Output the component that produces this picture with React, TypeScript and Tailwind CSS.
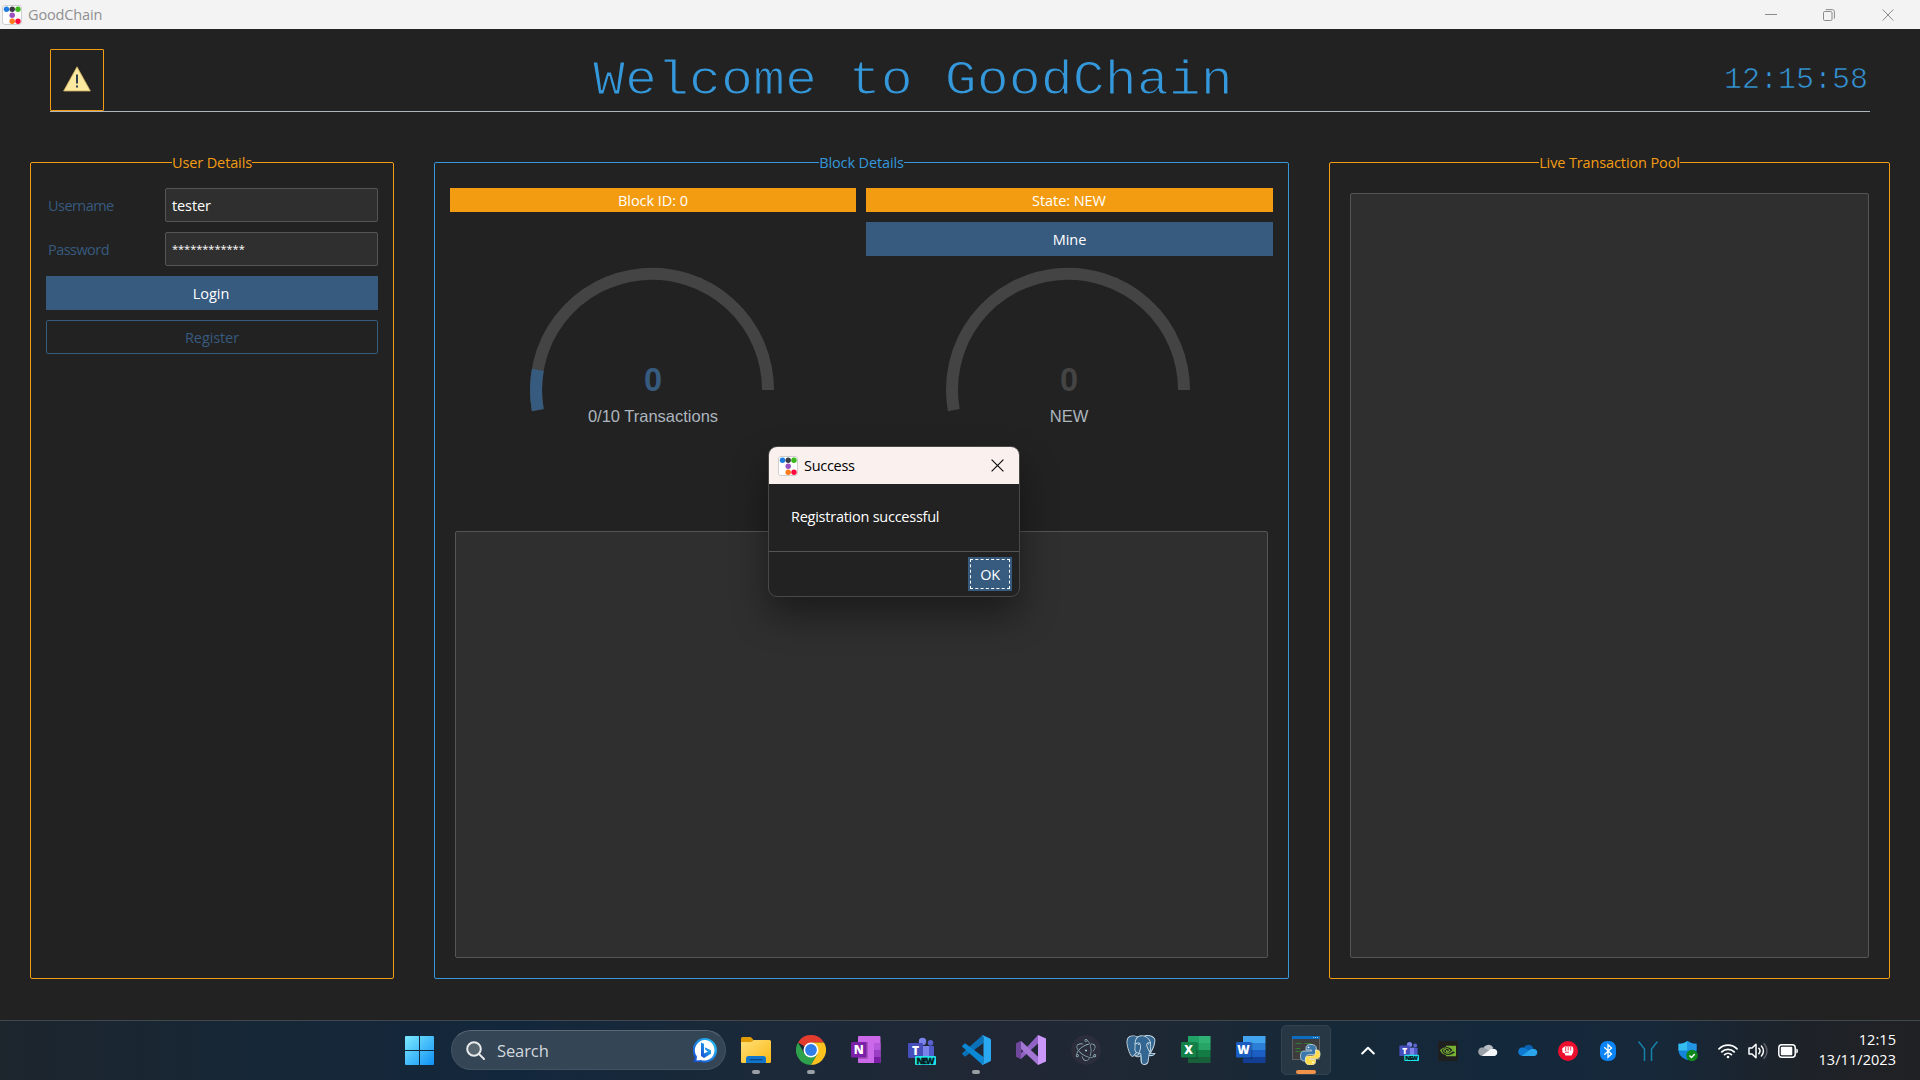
import type { ReactNode } from "react";
import { SiElectron, SiNvidia, SiPostgresql } from "react-icons/si";

function AppLogo() {
  return (
    <svg width="20" height="20" viewBox="0 0 20 20">
      <rect x="0.5" y="0.5" width="19" height="19" rx="2.5" fill="#fff" stroke="#cfcfcf" />
      <circle cx="4.5" cy="4.2" r="2.7" fill="#1e7be0" />
      <circle cx="10.2" cy="4.2" r="2.7" fill="#3b3b46" />
      <circle cx="16" cy="4.2" r="2.7" fill="#3cb81c" />
      <circle cx="10.2" cy="10.2" r="2.7" fill="#9b51bf" />
      <circle cx="10.2" cy="16.3" r="2.7" fill="#ff7a1a" />
      <circle cx="16" cy="16.3" r="2.7" fill="#ff0a3c" />
    </svg>
  );
}

function TitleBar() {
  return (
    <div className="flex h-[29px] items-center bg-[#f3f3f3] pl-[2px] pr-[26px]">
      <AppLogo />
      <span className="ml-[6px] flex-1 text-[14.5px] leading-5 tracking-[-0.15px] text-[#8f8f8f]">GoodChain</span>
      <div className="flex items-center gap-[47px] text-[#8a8a8a]">
        <svg width="12" height="12" viewBox="0 0 12 12" fill="none" stroke="currentColor" className="mr-[-1px]">
          <path d="M0 5.5h12" />
        </svg>
        <svg width="12" height="12" viewBox="0 0 12 12" fill="none" stroke="currentColor">
          <rect x="0.5" y="2.5" width="8.5" height="9" rx="1.2" />
          <path d="M2.8 .6H9.4a2 2 0 0 1 2 2V9.6" />
        </svg>
        <svg width="12" height="12" viewBox="0 0 12 12" fill="none" stroke="currentColor">
          <path d="M.7.5 11.3 11.5M11.3.5.7 11.5" />
        </svg>
      </div>
    </div>
  );
}

function Header() {
  return (
    <header className="mx-[50px] mt-5 flex h-[63px] items-start border-b border-[#adb5bd]">
      <div className="flex h-[62px] w-[54px] items-center justify-center rounded-[1px] border border-[#f39c12]">
        <svg width="28" height="26" viewBox="0 0 28 26" className="mt-[-3px]">
          <path d="M14 .8 27.4 25H.6Z" fill="#fce9a0" stroke="#c9a95a" strokeWidth=".8" strokeLinejoin="round" />
          <rect x="13" y="8.5" width="2" height="9" fill="#2f3e50" />
          <rect x="13" y="19.5" width="2" height="2" fill="#2f3e50" />
        </svg>
      </div>
      <h1 className="flex-1 origin-bottom scale-y-[0.91] pl-[489px] font-['Liberation_Mono',monospace] text-[53.3px] leading-[60px] text-[#3498db] [-webkit-text-stroke:1.3px_#222]">
        Welcome to GoodChain
      </h1>
      <div className="mt-[13px] scale-y-[0.96] pr-[2px] font-['Liberation_Mono',monospace] text-[30px] leading-9 text-[#3498db] [-webkit-text-stroke:0.7px_#222]">
        12:15:58
      </div>
    </header>
  );
}

function Panel({ title, className, children }: { title: string; className: string; children: ReactNode }) {
  return (
    <fieldset className={"h-[827px] rounded-[2px] border " + className}>
      <legend className="mx-auto h-[21px] whitespace-nowrap text-[14.5px] leading-[21px] tracking-[-0.12px]">
        {title}
      </legend>
      {children}
    </fieldset>
  );
}

function Field({ label, value, masked }: { label: string; value: string; masked?: boolean }) {
  return (
    <div className="flex h-[34px] items-center">
      <span className="w-[117px] pt-px text-[14.5px] leading-5 tracking-[-0.55px] text-[#375a7f]">{label}</span>
      <div
        className={
          "flex h-[34px] flex-1 items-center rounded-[2px] border border-[#555] bg-[#2f2f2f] pl-[6px] pt-px text-white " +
          (masked ? "text-[11px]" : "text-[14.5px] tracking-[-0.1px]")
        }
      >
        {value}
      </div>
    </div>
  );
}

function UserPanel() {
  return (
    <Panel title="User Details" className="w-[364px] border-[#f39c12] text-[#f39c12]">
      <div className="flex flex-col gap-[10px] pl-[15px] pr-[15px] pt-[15px] text-[14.5px]">
        <div className="flex flex-col gap-[10px] pl-[2px]">
          <Field label="Username" value="tester" />
          <Field label="Password" value="************" masked />
        </div>
        <div className="flex h-[34px] items-center justify-center bg-[#375a7f] pr-[2px] pt-px text-white">Login</div>
        <div className="flex h-[34px] items-center justify-center rounded-[2px] border border-[#375a7f] pt-px tracking-[-0.1px] text-[#375a7f]">
          Register
        </div>
      </div>
    </Panel>
  );
}

function Gauge({ label, started }: { label: string; started: boolean }) {
  return (
    <svg width="406" height="269" viewBox="0 0 406 269" fill="none" fontFamily="Liberation Sans, sans-serif">
      <path d="M87.8 148.1A116 116 0 1 1 318 128" stroke="#444" strokeWidth="12" />
      {started && <path d="M87.8 148.1A116 116 0 0 1 87.8 107.9" stroke="#375a7f" strokeWidth="12" />}
      <text x="203" y="129" textAnchor="middle" fontSize="32.5" fontWeight="700" fill={started ? "#375a7f" : "#444"}>
        0
      </text>
      <text x="203" y="160" textAnchor="middle" fontSize="16.5" fill="#adb5bd">
        {label}
      </text>
    </svg>
  );
}

function BlockPanel() {
  return (
    <Panel title="Block Details" className="ml-10 w-[855px] border-[#3498db] text-[#3498db]">
      <div className="flex flex-col px-[15px] pt-[15px] text-[14.5px] tracking-[-0.05px] text-white">
        <div className="grid grid-cols-[406px_407px] gap-[10px]">
          <div className="flex h-6 items-center justify-center bg-[#f39c12] pt-px">Block ID: 0</div>
          <div className="flex h-6 items-center justify-center bg-[#f39c12] pr-px pt-px">State: NEW</div>
          <div />
          <div className="flex h-[34px] items-center justify-center bg-[#375a7f] pt-px">Mine</div>
        </div>
        <div className="mt-[6px] grid grid-cols-[406px_407px] gap-[10px] tracking-normal">
          <Gauge label="0/10 Transactions" started />
          <Gauge label="NEW" started={false} />
        </div>
        <div className="ml-[5px] h-[427px] w-[813px] rounded-[2px] border border-[#555] bg-[#2f2f2f]" />
      </div>
    </Panel>
  );
}

function PoolPanel() {
  return (
    <Panel title="Live Transaction Pool" className="ml-10 w-[561px] border-[#f39c12] text-[#f39c12]">
      <div className="px-5 pt-5">
        <div className="h-[765px] w-[519px] rounded-[2px] border border-[#555] bg-[#2f2f2f]" />
      </div>
    </Panel>
  );
}

function Dialog() {
  return (
    <div className="absolute left-[768px] top-[446px] flex h-[151px] w-[252px] flex-col overflow-hidden rounded-[9px] border border-[#484848] bg-[#222] shadow-[0_18px_36px_rgba(0,0,0,0.42)]">
      <div className="flex h-[37px] shrink-0 items-center bg-[#faf0ee] pl-[9px] pr-[15px] text-black">
        <AppLogo />
        <span className="ml-[6px] flex-1 pt-px text-[14.5px] tracking-[-0.3px]">Success</span>
        <svg width="13" height="13" viewBox="0 0 13 13" fill="none" stroke="#111" strokeWidth="1.2" className="mt-[-1px]">
          <path d="M.6.6 12.4 12.4M12.4.6.6 12.4" />
        </svg>
      </div>
      <div className="flex h-[67px] shrink-0 items-center pb-[2px] pl-[22px] text-[14.5px] tracking-[-0.25px] text-white">
        Registration successful
      </div>
      <div className="flex flex-1 justify-end border-t border-[#555] pr-[7px] pt-[5px]">
        <div className="flex h-[34px] w-11 bg-[#375a7f] p-[2px]">
          <div className="flex flex-1 items-center justify-center border border-dashed border-white pt-px text-[14.5px] tracking-[-0.4px] text-white">
            OK
          </div>
        </div>
      </div>
    </div>
  );
}

function Explorer() {
  return (
    <svg width="30" height="30" viewBox="0 0 30 30">
      <defs>
        <linearGradient id="fold" x1="0" y1="0" x2="1" y2="1">
          <stop stopColor="#ffe07a" />
          <stop offset="1" stopColor="#fbb914" />
        </linearGradient>
      </defs>
      <path d="M0 3.5Q0 2 1.500 2H9q1 0 1.800 1L13 5.500V10H0Z" fill="#e09b05" />
      <path d="M0 7H10L13 5H28.500Q30 5 30 6.500V26.500Q30 28 28.500 28H1.500Q0 28 0 26.500Z" fill="url(#fold)" />
      <path d="M5 28V23.500Q5 21 7.500 21H22.500Q25 21 25 23.500V28Z" fill="#0f76cb" />
      <path d="M8.500 24.700H21.500" stroke="#0a4a8c" strokeWidth="1.400" />
    </svg>
  );
}

function Chrome() {
  return (
    <svg width="30" height="30" viewBox="0 0 30 30">
      <path d="M15 15 2 7.500A15 15 0 0 1 28 7.500L15 7.500Z" fill="#e33b2e" />
      <path d="M2 7.500A15 15 0 0 0 15 30L21.500 18.750 15 15 8.500 18.750Z" fill="#2da14b" />
      <path d="M28 7.500A15 15 0 0 1 15 30L21.500 18.750 15 7.500Z" fill="#fcc31e" />
      <circle cx="15" cy="15" r="7.500" fill="#fff" />
      <circle cx="15" cy="15" r="5.900" fill="#2f7de9" />
    </svg>
  );
}

function OfficeIcon({ letter, tile, bands }: { letter: string; tile: string; bands: string[] }) {
  return (
    <svg width="30" height="30" viewBox="0 0 30 30" fontFamily="Open Sans, sans-serif">
      <rect x="7" y="1" width="22.500" height="7" fill={bands[0]} />
      <rect x="7" y="8" width="22.500" height="7" fill={bands[1]} />
      <rect x="7" y="15" width="22.500" height="7" fill={bands[2]} />
      <rect x="7" y="22" width="22.500" height="6" fill={bands[3]} />
      {letter === "X" && <path d="M18 1h11.500v7H18ZM18 8h11.500v7H18Z" fill="#5be09a" opacity=".25" />}
      <rect x="7" y="7" width="9.500" height="17" fill="#000" opacity=".18" />
      <rect x="0" y="7" width="15" height="15.500" rx="1.300" fill={tile} />
      <text x="7.500" y="19" textAnchor="middle" fontSize="12" fontWeight="800" fill="#fff">
        {letter}
      </text>
    </svg>
  );
}

function OneNote() {
  return (
    <svg width="30" height="30" viewBox="0 0 30 30" fontFamily="Open Sans, sans-serif">
      <rect x="7" y="1" width="22.500" height="27" rx="1" fill="#cc69ea" />
      <rect x="23" y="8" width="6.500" height="7" fill="#b558dc" />
      <rect x="23" y="15" width="6.500" height="7" fill="#9a3fc4" />
      <rect x="23" y="22" width="6.500" height="6" fill="#7a1fa5" />
      <rect x="7" y="7" width="10" height="17" fill="#000" opacity=".18" />
      <rect x="0" y="7" width="15.500" height="15.500" rx="1.300" fill="#7b21a8" />
      <text x="7.700" y="19" textAnchor="middle" fontSize="12" fontWeight="800" fill="#fff">
        N
      </text>
    </svg>
  );
}

function Teams({ size }: { size: number }) {
  return (
    <svg width={size} height={size} viewBox="0 0 30 30" fontFamily="Open Sans, sans-serif">
      <circle cx="16.500" cy="6.500" r="3.700" fill="#7b83eb" />
      <circle cx="24.500" cy="7.800" r="2.800" fill="#5b62d0" />
      <rect x="19" y="11" width="9" height="12" rx="1" fill="#5059c9" />
      <rect x="13" y="11" width="10" height="13" fill="#7b83eb" />
      <rect x="2" y="8" width="15" height="15" rx="1" fill="#464ebc" />
      <text x="9.500" y="19.800" textAnchor="middle" fontSize="12" fontWeight="800" fill="#fff">
        T
      </text>
      <rect x="9" y="21" width="21" height="9" rx="1" fill="#1fe3e6" />
      <text x="19.500" y="28.500" textAnchor="middle" fontSize="8.500" fontWeight="800" textLength="18" fill="#06181c" stroke="#06181c" strokeWidth=".3">
        NEW
      </text>
    </svg>
  );
}

function VSCode() {
  return (
    <svg width="30" height="30" viewBox="0 0 30 30">
      <path d="M1.200 19 3.300 21.200Q4 21.700 4.700 21.200L22.500 8V1.200Q21.500.2 20.600.9L1.200 18.200Q.8 18.600 1.200 19Z" fill="#0a70b8" />
      <path d="M1.200 11 3.300 8.800Q4 8.300 4.700 8.800L22.500 22V28.800Q21.500 29.800 20.600 29.100L1.200 11.800Q.8 11.400 1.200 11Z" fill="#0b87d3" />
      <path d="M22 .3 29 3.600Q30 4.200 30 5V25Q30 25.800 29 26.400L22 29.700Q21 30 20.500 29.200 22.500 29.500 22.500 27.500V2.500Q22.500.5 20.500.8 21 0 22 .3Z" fill="#2aa9f3" />
    </svg>
  );
}

function VisualStudio() {
  return (
    <svg width="30" height="30" viewBox="0 0 30 30">
      <path d="M0 8.500 5 6 22 21.500V29.500L5.500 12V19L0 21.500Z" fill="#6b4596" />
      <path d="M0 21.500 5.500 18 22 0V8.500L5 24Z" fill="#9062c4" />
      <path d="M5 6 22 22V30L2 11Z" fill="#a476d4" />
      <path d="M22 0 30 3.500V26.500L22 30Z" fill="#cb98fa" />
      <path d="M0 8.500 5 6V24L0 21.500Z" fill="#6f479b" />
    </svg>
  );
}

function Postgres() {
  return (
    <div className="grid h-[30px] w-[30px]">
      <svg width="30" height="30" viewBox="0 0 30 30" className="col-start-1 row-start-1">
        <path
          d="M1 5C1.500 1.500 5 .8 9 1.500 12 .8 14 .8 16 1.200 19 .5 22 .3 24 1 28 1.800 29.500 4 28.500 8 27.500 12 26 15 24.500 17.500L28.500 18.500C28 21 25 21.800 22.500 21.500L22 25C21.500 28.500 19.500 29.500 17.500 29.300 15 29 14.500 26 14 21L9.500 20.500C8 21.500 6 21.500 5 19.500 2.500 15 .8 9 1 5Z"
          fill="#336791"
        />
      </svg>
      <SiPostgresql size={30} color="#c9d9e4" className="col-start-1 row-start-1" />
    </div>
  );
}

function PythonConsole() {
  return (
    <svg width="30" height="30" viewBox="0 0 30 30" className="shrink-0">
      <rect x="1.500" y="1.500" width="27" height="23" fill="#3d3d3d" stroke="#6b6b6b" strokeWidth=".8" />
      <rect x="1" y="1" width="27.500" height="3" fill="#0b6cc0" />
      <path d="M22 2.500h5" stroke="#9cc9f0" strokeDasharray="1 1" />
      <path d="M4.500 8.500h6m3 0h7M4.500 13.500h5M4.500 16.500h8" stroke="#327b34" strokeWidth="1.200" />
      <path
        d="M20 9.500c-4 0-5 1.500-5 3.500v2h5.500v1H13c-2.500 0-3.500 2-3.500 5s1 5 3.200 5h2v-3c0-2 1.500-3.500 3.600-3.500h4c2 0 3-1.200 3-3V13c0-2.300-2-3.500-5.300-3.500Z"
        fill="#3c78aa"
        stroke="#c9dbe8"
        strokeWidth=".8"
      />
      <path
        d="M19.500 30c4 0 5-1.500 5-3.500v-2H19v-1h6.800c2.500 0 3.200-2 3.200-4.500s-1-4-3-4h-1.500v2.500c0 2-1.500 3.500-3.500 3.500h-3.500c-2 0-3 1.200-3 3v2.700c0 2 2 3.300 5 3.300Z"
        fill="#ffdc4d"
        stroke="#f3ecc4"
        strokeWidth=".8"
      />
      <circle cx="17.500" cy="12.300" r=".9" fill="#fff" />
      <circle cx="22" cy="27.300" r=".9" fill="#fff" />
    </svg>
  );
}

function TaskIcon({ children, running }: { children: ReactNode; running?: boolean }) {
  return (
    <div className="flex h-[59px] w-[55px] flex-col items-center pl-px pt-[14px]">
      <div className="h-[30px] w-[30px]">{children}</div>
      {running && <div className="mt-[5px] h-1 w-2 rounded-full bg-[#9a9fa5]" />}
    </div>
  );
}

function TrayIcon({ children, className = "w-10" }: { children: ReactNode; className?: string }) {
  return <div className={"flex h-5 items-center justify-center " + className}>{children}</div>;
}

function Cloud({ back, mid, front }: { back: string; mid: string; front: string }) {
  return (
    <svg width="20" height="20" viewBox="0 0 20 20" className="mt-[-2px]">
      <path d="M5 10a5.500 5.500 0 0 1 10.300-2.300L12 12Z" fill={back} />
      <path d="M4.500 16A4.300 4.300 0 1 1 7 8.200L14 12 6 16Z" fill={mid} />
      <path d="M4 15.700 12.500 9.300A4.500 4.500 0 0 1 16.500 9 3.600 3.600 0 0 1 16.500 16H4.500Z" fill={front} />
    </svg>
  );
}

function Taskbar() {
  return (
    <footer className="flex h-[60px] border-t border-[#40484f] bg-[linear-gradient(90deg,#1d252d_0%,#162737_14%,#13273c_27%,#1a2939_38%,#212734_53%,#1d2835_62%,#152939_70%,#14283b_78%,#16283a_86%,#1e2228_94%,#202124_100%)]">
      <div className="flex w-[728px] items-start pl-[405px]">
        <svg width="29" height="29" viewBox="0 0 29 29" className="mt-[15px]">
          <defs>
            <linearGradient id="win" x1="0" y1="0" x2="1" y2="1">
              <stop stopColor="#7deaff" />
              <stop offset="1" stopColor="#0f90f5" />
            </linearGradient>
          </defs>
          <path d="M1 0h13v14H0V1Q0 0 1 0ZM15 0h13q1 0 1 1v13H15ZM0 15h14v14H1q-1 0-1-1ZM15 15h14v13q0 1-1 1H15Z" fill="url(#win)" />
        </svg>
        <div className="ml-[17px] mt-[9px] flex h-10 w-[275px] items-center rounded-full border border-[#435361] border-t-[#5b6875] bg-[#344556] pl-[14px] pr-[7px]">
          <svg width="19" height="19" viewBox="0 0 19 19" fill="none" stroke="#e8eaec" strokeWidth="2">
            <circle cx="8" cy="8" r="6.800" fill="#57656f" />
            <path d="m13 13 5 5" strokeLinecap="round" />
          </svg>
          <span className="ml-[12px] flex-1 pt-[2px] text-[16.500px] tracking-[-0.1px] text-[#d3d8dc]">Search</span>
          <svg width="25" height="25" viewBox="0 0 25 25">
            <defs>
              <linearGradient id="bing" x1="1" y1="0" x2="0" y2="1">
                <stop stopColor="#25c7f4" />
                <stop offset="1" stopColor="#1746d1" />
              </linearGradient>
            </defs>
            <path d="M12.500 0A12.300 12.300 0 1 1 8 24H1Q0 24 .5 23L2 19.500A12.300 12.300 0 0 1 12.500 0Z" fill="url(#bing)" />
            <path d="M12.500 2A10.300 10.300 0 1 1 8 22L3.500 22.500 4 18.500A10.300 10.300 0 0 1 12.500 2Z" fill="#fff" />
            <path d="M8 4.500 11 5.800V15.500L15 13.500 12.500 12 11.700 9.200 18 12.200V15.800L11 20 8 18Z" fill="url(#bing)" />
          </svg>
        </div>
      </div>
      <div className="flex">
        <TaskIcon running>
          <Explorer />
        </TaskIcon>
        <TaskIcon running>
          <Chrome />
        </TaskIcon>
        <TaskIcon>
          <OneNote />
        </TaskIcon>
        <TaskIcon>
          <Teams size={30} />
        </TaskIcon>
        <TaskIcon running>
          <VSCode />
        </TaskIcon>
        <TaskIcon>
          <VisualStudio />
        </TaskIcon>
        <TaskIcon>
          <div className="flex h-[30px] w-[30px] items-center justify-center rounded-full bg-[#2b2e3a]">
            <SiElectron size={22} color="#a5cdd6" />
          </div>
        </TaskIcon>
        <TaskIcon>
          <Postgres />
        </TaskIcon>
        <TaskIcon>
          <OfficeIcon letter="X" tile="#138048" bands={["#21a366", "#179055", "#137c44", "#17603a"]} />
        </TaskIcon>
        <TaskIcon>
          <OfficeIcon letter="W" tile="#1a5cbf" bands={["#43a4ef", "#2c7fd7", "#1b5fc4", "#123f93"]} />
        </TaskIcon>
        <div className="ml-[3px] mt-1 flex h-[50px] w-[50px] flex-col items-center rounded-[5px] border border-[#33424f] bg-[#273744] pt-[9px]">
          <PythonConsole />
          <div className="mt-[5px] h-1 w-5 shrink-0 rounded-full bg-[#f0924a]" />
        </div>
      </div>
      <div className="ml-[17px] flex h-[59px] items-center">
        <TrayIcon>
          <svg width="14" height="9" viewBox="0 0 14 9" fill="none" stroke="#fff" strokeWidth="2" strokeLinecap="round" strokeLinejoin="round">
            <path d="M1.200 7.500 7 1.700 12.800 7.500" />
          </svg>
        </TrayIcon>
        <TrayIcon>
          <Teams size={21} />
        </TrayIcon>
        <TrayIcon>
          <div className="flex h-5 w-5 items-center justify-center bg-[#1f1f1f]">
            <SiNvidia size={16} color="#76b034" />
          </div>
        </TrayIcon>
        <TrayIcon>
          <Cloud back="#b9bec3" mid="#9aa1a9" front="#f6f7f8" />
        </TrayIcon>
        <TrayIcon>
          <Cloud back="#0a62b5" mid="#0e7ad1" front="#2aa5ec" />
        </TrayIcon>
        <TrayIcon>
          <svg width="20" height="20" viewBox="0 0 20 20">
            <circle cx="10" cy="10" r="10" fill="#ed0f2d" />
            <path d="M4.200 7.500 6.500 5.500H14.500L15.300 7.500V11L13.500 14.500H7.500L6.800 12.500 4.500 11.500Z" fill="#fff" />
            <path d="M7.700 6V10M10.200 6V9.500M12.700 6V9.500M7 11.200H11" stroke="#ed0f2d" strokeWidth=".8" />
          </svg>
        </TrayIcon>
        <TrayIcon>
          <svg width="16" height="20" viewBox="0 0 16 20" fill="none">
            <rect width="16" height="20" rx="7" fill="#0a84f7" />
            <path d="M4.300 6.300 11.500 13 8 16.300V3.700L11.500 7 4.300 13.700" stroke="#fff" strokeWidth="1.300" />
          </svg>
        </TrayIcon>
        <TrayIcon>
          <svg width="20" height="20" viewBox="0 0 20 20" fill="none" stroke="#1683ab" strokeWidth="1.500">
            <path d="M.5.5 6.500 8V20M19.500.5 13.500 8V20" />
          </svg>
        </TrayIcon>
        <TrayIcon>
          <svg width="20" height="20" viewBox="0 0 20 20">
            <path d="M9.500 0C7 2 3.500 2.800.5 2.800V9C.5 14 4.500 17.500 9.500 19 14.500 17.500 18.500 14 18.500 9V2.800C15.500 2.800 12 2 9.500 0Z" fill="#1484da" />
            <path d="M9.500 0V9.500H.5V2.800C3.500 2.800 7 2 9.500 0Z" fill="#35bdf0" />
            <path d="M9.500 0V9.500H18.500V2.800C15.500 2.800 12 2 9.500 0Z" fill="#2296e4" />
            <circle cx="14" cy="14.500" r="5.800" fill="#10871b" />
            <path d="m11.500 14.500 2 2 3.300-3.500" fill="none" stroke="#fff" strokeWidth="1.400" />
          </svg>
        </TrayIcon>
        <TrayIcon className="w-10">
          <svg width="20" height="16" viewBox="0 0 20 16" fill="none" stroke="#fff" strokeWidth="1.700" strokeLinecap="round">
            <path d="M1 5.800a12.800 12.800 0 0 1 18 0M3.800 8.900a8.800 8.800 0 0 1 12.400 0M6.600 11.700a4.900 4.900 0 0 1 6.800 0" />
            <circle cx="10" cy="14" r="1.300" fill="#fff" stroke="none" />
          </svg>
        </TrayIcon>
        <TrayIcon className="w-5">
          <svg width="20" height="18" viewBox="0 0 20 18" fill="none" stroke="#fff" strokeWidth="1.500" strokeLinecap="round" strokeLinejoin="round">
            <path d="M1 6h3l4-3.800v13.600L4 12H1Z" />
            <path d="M10.800 6.300a4 4 0 0 1 0 5.400M13.400 4a7.200 7.200 0 0 1 0 10" />
            <path d="M16 1.800a10.300 10.300 0 0 1 0 14.400" stroke="#5b6167" />
          </svg>
        </TrayIcon>
        <TrayIcon className="ml-[10px] w-5">
          <svg width="20" height="14" viewBox="0 0 20 14" fill="none">
            <rect x=".8" y=".8" width="16.400" height="12.400" rx="3" stroke="#fff" strokeWidth="1.500" />
            <rect x="2.800" y="2.800" width="11.500" height="8.400" rx="1" fill="#fff" />
            <path d="M18.300 4.500V9.500q1.700-.3 1.700-2.500t-1.700-2.500Z" fill="#fff" />
          </svg>
        </TrayIcon>
      </div>
      <div className="flex flex-1 flex-col items-end pr-[24px] pt-[9px] text-[14.500px] leading-5 tracking-[0.05px] text-white">
        <span>12:15</span>
        <span>13/11/2023</span>
      </div>
    </footer>
  );
}

export default function App() {
  return (
    <div className="relative flex h-[1080px] w-[1920px] flex-col overflow-hidden bg-[#222] font-['Open_Sans','Noto_Sans',sans-serif]">
      <TitleBar />
      <Header />
      <main className="flex flex-1 pl-[30px] pt-10">
        <UserPanel />
        <BlockPanel />
        <PoolPanel />
      </main>
      <Taskbar />
      <Dialog />
    </div>
  );
}
